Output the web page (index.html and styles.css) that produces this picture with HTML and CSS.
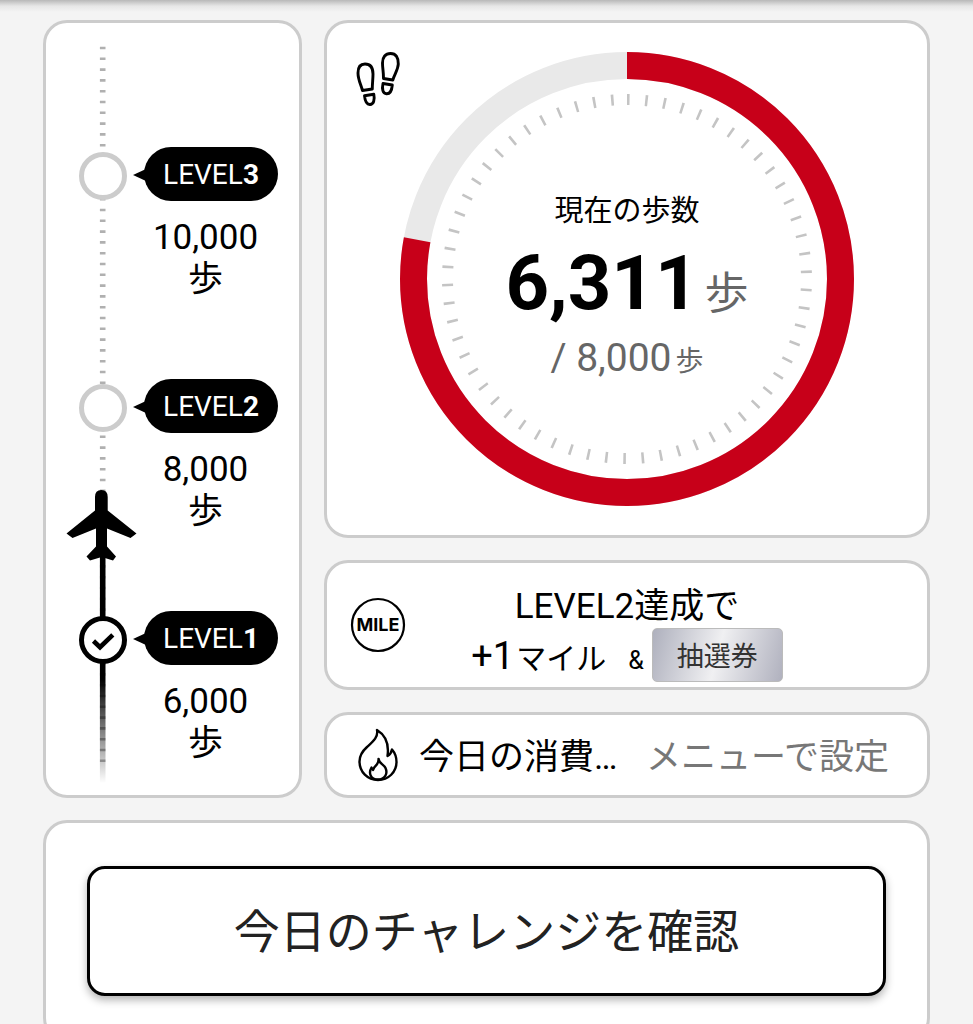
FILE: index.html
```html
<!DOCTYPE html>
<html lang="ja">
<head>
<meta charset="utf-8">
<meta name="viewport" content="width=device-width, initial-scale=1">
<title>今日の歩数</title>
<link rel="stylesheet" href="styles.css">
</head>
<body>
<div class="top-shadow"></div>
<main class="page">
  <div class="dashboard">
    <section class="card levels" aria-label="レベル">
      <svg class="rail" width="74" height="772" viewBox="0 0 74 772" aria-hidden="true">
        <defs>
          <linearGradient id="fade" x1="0" y1="642" x2="0" y2="760" gradientUnits="userSpaceOnUse">
            <stop offset="0" stop-color="#000"/>
            <stop offset="0.12" stop-color="#000"/>
            <stop offset="1" stop-color="#000" stop-opacity="0"/>
          </linearGradient>
        </defs>
        <path d="M36.7 23.7V742" stroke="#b0b0b0" stroke-width="5.6" stroke-dasharray="2.6 8.2"/>
        <rect x="33.9" y="530" width="5.6" height="112" fill="#000"/>
        <rect x="33.9" y="642" width="5.6" height="118" fill="url(#fade)"/>
        <path d="M29 474Q29 467 35.3 467Q41.7 467 41.7 474V487.5L70.5 510.5L64.5 515L41 505.5V523.5L50 533.5L47 537.5L35.7 534L24 537.5L20.5 533.5L30 523.5V505.5L6.5 515L0.5 510.5L29 487.5Z" fill="#000"/>
      </svg>
      <ol class="level-list">
        <li class="level">
          <span class="marker"></span>
          <div class="level-info">
            <div class="pill">LEVEL<b>3</b></div>
            <div class="goal">10,000<br>歩</div>
          </div>
        </li>
        <li class="level">
          <span class="marker"></span>
          <div class="level-info">
            <div class="pill">LEVEL<b>2</b></div>
            <div class="goal">8,000<br>歩</div>
          </div>
        </li>
        <li class="level">
          <span class="marker done">
            <svg width="38" height="38" viewBox="0 0 38 38" aria-hidden="true"><path d="M9.5 20L16 26.2L28.8 13.8" fill="none" stroke="#000" stroke-width="4.6"/></svg>
          </span>
          <div class="level-info">
            <div class="pill">LEVEL<b>1</b></div>
            <div class="goal">6,000<br>歩</div>
          </div>
        </li>
      </ol>
    </section>

    <div class="side">
      <section class="card steps">
        <svg class="feet" width="46" height="56" viewBox="0 0 46 56" fill="none" stroke="#000" stroke-width="2.9" stroke-linejoin="round" aria-hidden="true">
          <path d="M6.5 38.5C4.5 31.5 2 27.5 2 21C2 15 4.5 12 9 12C14 12 17 15.5 17 22C17 27.5 16.300 31 16.300 37Z"/>
          <path d="M8.5 43.7L17.8 42.2C19 48 17.5 52.2 14 52.5C10.5 52.7 9 49 8.5 43.7Z"/>
          <path d="M27.5 26.5C27.5 19 26.5 16.5 26.5 11C26.5 5 29.5 1.5 34.5 1.5C40 1.5 42.5 5.5 42.300 12C42 18 38.5 22 36.8 28Z"/>
          <path d="M27 31.5L36.300 33C35.8 38.5 33.8 42 30.5 41.8C26.7 41.5 25.8 37 27 31.5Z"/>
        </svg>
        <div class="gauge">
          <svg class="ring" viewBox="0 0 454 454" fill="none" aria-hidden="true">
            <circle cx="227" cy="227" r="213.5" stroke="#e9e9e9" stroke-width="27"/>
            <circle cx="227" cy="227" r="213.5" stroke="#c70019" stroke-width="27" pathLength="1000" stroke-dasharray="779.5 1000" transform="rotate(-90 227 227)"/>
            <circle cx="227" cy="227" r="179.5" stroke="#c4c4c4" stroke-width="11" stroke-dasharray="2.6 15.62" transform="rotate(-90 227 227)"/>
          </svg>
          <div class="reading">
            <div class="caption">現在の歩数</div>
            <div class="count">6,311<small>歩</small></div>
            <div class="target">/ 8,000<small>歩</small></div>
          </div>
        </div>
      </section>

      <section class="card reward">
        <svg width="56" height="56" viewBox="0 0 56 56" aria-hidden="true">
          <circle cx="28" cy="28" r="26" fill="none" stroke="#000" stroke-width="2.2"/>
          <text class="mile" x="28" y="34" text-anchor="middle">MILE</text>
        </svg>
        <div class="reward-text">
          <div class="reward-title">LEVEL2達成で</div>
          <div class="reward-line">
            <div class="miles"><span class="plus">+1</span><span class="unit">マイル</span><span class="amp">&amp;</span></div>
            <span class="ticket">抽選券</span>
          </div>
        </div>
      </section>

      <section class="card burn">
        <svg width="42" height="54" viewBox="0 0 42 54" fill="none" stroke="#000" stroke-width="2.4" stroke-linejoin="round" aria-hidden="true">
          <path d="M20 2C21.5 9 16 13.5 10 19C5 23.5 2.5 28 2.5 33.5C2.5 44 10.5 52 21 52C31.5 52 39.5 44 39.5 34C39.5 29.5 38.5 25.5 35 21.5C34.5 24.5 33 26.5 30.5 28C32 17.5 29 7.5 20 2Z"/>
          <path d="M21.5 31C22 35 20 36.5 17.5 39L16 42L14.5 39.5C11.5 44.5 13 51.5 21 51.5C28 51.5 31 45.5 28.5 40C27 36.5 22 35.5 21.5 31Z"/>
        </svg>
        <span class="burn-label">今日の消費…</span>
        <span class="burn-value">メニューで設定</span>
      </section>
    </div>
  </div>

  <section class="card challenge">
    <button type="button" class="challenge-button">今日のチャレンジを確認</button>
  </section>
</main>
</body>
</html>
```
FILE: styles.css
```css
* {
  box-sizing: border-box;
}

body {
  margin: 0;
  background: #f4f4f4;
  color: #000;
  font-family: Roboto, "Noto Sans CJK JP", sans-serif;
}

.top-shadow {
  height: 12px;
  background: linear-gradient(#b8b8b8, #e6e6e6 50%, #f4f4f4);
}

.page {
  display: flex;
  flex-direction: column;
  gap: 22px;
  padding: 8px 43px 20px;
}

.dashboard {
  display: grid;
  grid-template-columns: 259px 1fr;
  gap: 22px;
}

.side {
  display: flex;
  flex-direction: column;
  gap: 22px;
}

.card {
  position: relative;
  background: #fff;
  border: 3px solid #ccc;
  border-radius: 24px;
}

/* Level ladder */
.levels {
  padding: 124px 21px 30px 33px;
}

.rail {
  position: absolute;
  top: 0;
  left: 20px;
}

.level-list {
  position: relative;
  display: flex;
  flex-direction: column;
  gap: 78px;
  margin: 0;
  padding: 0;
  list-style: none;
}

.level {
  display: flex;
  gap: 6px;
}

.marker {
  flex: none;
  width: 48px;
  height: 48px;
  margin-top: 5px;
  background: #fff;
  border: 5px solid #ccc;
  border-radius: 50%;
}

.marker.done {
  border-color: #000;
}

.marker svg {
  display: block;
}

.level-info {
  flex: 1;
}

.pill {
  position: relative;
  height: 54px;
  margin-left: 11px;
  border-radius: 27px;
  background: #000;
  color: #fff;
  font-size: 28px;
  line-height: 56px;
  text-align: center;
}

.pill::before {
  content: "";
  position: absolute;
  top: 22px;
  left: -11px;
  border: solid transparent;
  border-width: 6px 13px 6px 0;
  border-right-color: #000;
}

.goal {
  margin-top: 16px;
  font-size: 35px;
  line-height: 42px;
  text-align: center;
}

/* Step gauge */
.steps {
  padding: 29px 20px;
}

.feet {
  position: absolute;
  top: 29px;
  left: 29px;
}

.gauge {
  display: grid;
  justify-items: center;
  align-items: center;
}

.ring,
.reading {
  grid-area: 1 / 1;
}

.ring {
  display: block;
  width: 100%;
  max-width: 454px;
}

.reading {
  padding-top: 18px;
  text-align: center;
}

.caption {
  font-size: 29px;
  line-height: 40px;
}

.count {
  margin-top: 12px;
  font-size: 76px;
  font-weight: 700;
  line-height: 80px;
}

.count small {
  margin-left: 6px;
  color: #666;
  font-size: 44px;
  font-weight: 400;
}

.target {
  color: #666;
  font-size: 39px;
  line-height: 48px;
}

.target small {
  margin-left: 4px;
  font-size: 28px;
}

/* Reward */
.reward {
  display: grid;
  grid-template-columns: 56px 1fr 56px;
  align-items: center;
  height: 130px;
  padding: 0 23px;
}

.mile {
  font-family: Inter, sans-serif;
  font-size: 18px;
  font-weight: 700;
}

.reward-text {
  padding-top: 18px;
  text-align: center;
}

.reward-title {
  font-size: 35px;
  line-height: 42px;
}

.reward-line {
  display: flex;
  justify-content: center;
  align-items: flex-end;
}

.miles {
  display: flex;
  align-items: baseline;
  line-height: 42px;
}

.plus {
  font-size: 38px;
}

.unit {
  margin-left: 2px;
  font-size: 30px;
}

.amp {
  margin: 0 8px 0 22px;
  font-size: 25px;
}

.ticket {
  padding: 4px 24px 0;
  border: 1px solid #bbb;
  border-radius: 5px;
  background: linear-gradient(105deg, #aeb0bd, #f0f0f2 50%, #b0b1be);
  color: #333;
  font-size: 27px;
  line-height: 48px;
}

/* Calories */
.burn {
  display: flex;
  align-items: center;
  height: 86px;
  padding: 0 38px 0 30px;
  font-size: 35px;
}

.burn-label,
.burn-value {
  padding-bottom: 4px;
}

.burn-label {
  margin-left: 20px;
}

.burn-value {
  margin-left: auto;
  color: #777;
}

/* Challenge */
.challenge {
  padding: 43px 41px;
}

.challenge-button {
  display: block;
  width: 100%;
  height: 130px;
  padding: 0 0 6px;
  border: 3px solid #000;
  border-radius: 18px;
  background: #fff;
  box-shadow: 0 4px 8px rgba(0, 0, 0, 0.3);
  color: #222;
  font: 400 46px Roboto, "Noto Sans CJK JP", sans-serif;
}
```
